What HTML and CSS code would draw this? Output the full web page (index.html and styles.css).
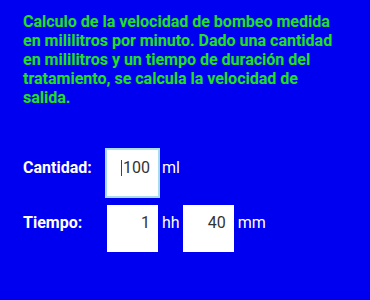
FILE: index.html
```html
<!DOCTYPE html>
<html lang="es">
<head>
    <meta charset="UTF-8">
    <meta name="viewport" content="width=device-width, initial-scale=1.0">
    <title>Velocidad de bombeo</title>
    <link rel="stylesheet" href="styles.css">
</head>
<body>
    <p class="intro">Calculo de la velocidad de bombeo medida en mililitros por minuto. Dado una cantidad en mililitros y un tiempo de duración del tratamiento, se calcula la velocidad de salida.</p>

    <div class="form">
        <div class="form-row">
            <span class="label">Cantidad:</span>
            <div class="field focused"><span class="caret"></span>100</div>
            <span class="unit">ml</span>
        </div>
        <div class="form-row">
            <span class="label">Tiempo:</span>
            <div class="field">1</div>
            <span class="unit">hh</span>
            <div class="field">40</div>
            <span class="unit">mm</span>
        </div>
    </div>
</body>
</html>
```

FILE: styles.css
```css
body {
    margin: 0;
    padding: 12px 23px 0 23px;
    background-color: #0000f0;
    font-family: Roboto, "Noto Sans", sans-serif;
    font-size: 16px;
    color: white;
}
.intro {
    margin: 0;
    color: #22e022;
    font-weight: bold;
    line-height: normal;
}
.form {
    margin-top: 43px;
    display: flex;
    flex-direction: column;
    gap: 9px;
}
.form-row {
    display: flex;
    align-items: baseline;
}
.label {
    width: 84px;
    font-weight: bold;
}
.field {
    box-sizing: border-box;
    width: 51px;
    height: 47px;
    padding: 8px 8px 0 0;
    background-color: white;
    color: #333;
    text-align: right;
    line-height: normal;
}
.field.focused {
    height: 46px;
    outline: 2px solid #a8dcf0;
}
.caret {
    display: inline-block;
    width: 0;
    height: 16px;
    margin-right: 1px;
    border-left: 1px solid #444;
    vertical-align: -3px;
}
.unit {
    margin: 0 3px 0 4px;
}
```
